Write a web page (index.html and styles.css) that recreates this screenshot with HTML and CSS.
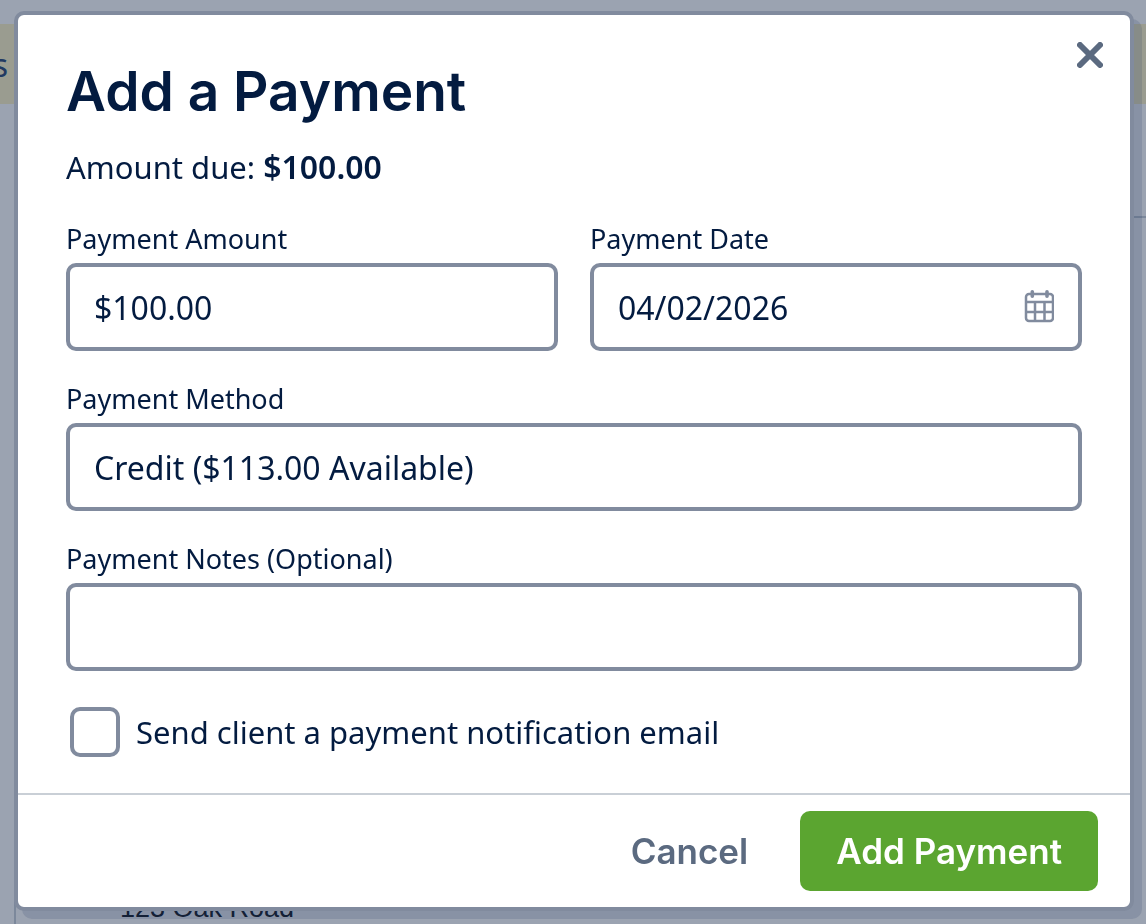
FILE: index.html
```
<!DOCTYPE html>
<html lang="en">
<head>
  <meta charset="UTF-8">
  <meta name="viewport" content="width=device-width, initial-scale=1.0">
  <title>Add a Payment</title>
  <link rel="stylesheet" href="styles.css">
</head>
<body>
  <div class="page">
    <div class="banner"><span>s</span></div>
    <div class="invoice">
      <p class="address">123 Oak Road</p>
    </div>
  </div>

  <div class="overlay">
    <form class="modal" role="dialog" aria-labelledby="modal-title">
      <button type="button" class="close" aria-label="Close">
        <svg viewBox="0 0 26 26" width="26" height="26">
          <path d="M3 3L23 23M23 3L3 23" stroke="currentColor" stroke-width="6" stroke-linecap="round"/>
        </svg>
      </button>

      <div class="modal-body">
        <h1 id="modal-title">Add a Payment</h1>
        <p class="due">Amount due: <strong>$100.00</strong></p>

        <div class="fields">
          <div class="field">
            <label for="amount">Payment Amount</label>
            <input type="text" id="amount" class="control" value="$100.00">
          </div>
          <div class="field">
            <label for="date">Payment Date</label>
            <div class="control date-control">
              <input type="text" id="date" value="04/02/2026">
              <button type="button" class="calendar" aria-label="Choose date">
                <svg viewBox="0 0 30 34" width="30" height="34" fill="none" stroke="currentColor" stroke-width="2.5">
                  <rect x="2" y="4" width="27" height="27" rx="3"/>
                  <path d="M2 12H29M2 22H29M11 12V31M20.500 12V31"/>
                  <path d="M8.300 1.800V6.200M23 1.800V6.200" stroke-width="3.600" stroke-linecap="round"/>
                </svg>
              </button>
            </div>
          </div>
          <div class="field wide">
            <label for="method">Payment Method</label>
            <select id="method" class="control">
              <option>Credit ($113.00 Available)</option>
            </select>
          </div>
          <div class="field wide">
            <label for="notes">Payment Notes (Optional)</label>
            <input type="text" id="notes" class="control">
          </div>
        </div>

        <div class="notify">
          <input type="checkbox" id="notify">
          <label for="notify">Send client a payment notification email</label>
        </div>
      </div>

      <div class="modal-footer">
        <button type="button" class="btn btn-cancel">Cancel</button>
        <button type="submit" class="btn btn-primary">Add Payment</button>
      </div>
    </form>
  </div>
</body>
</html>
```

FILE: styles.css
```
* {
  box-sizing: border-box;
}
body {
  margin: 0;
  font-family: "Noto Sans", sans-serif;
  font-size: 32px;
  color: #031b40;
}
h1, p {
  margin: 0;
}
button, input, select {
  font: inherit;
  color: inherit;
}
button {
  border: none;
  background: none;
  padding: 0;
  cursor: pointer;
}

/* page behind the dialog */
.page {
  height: 100vh;
  padding-top: 24px;
  overflow: hidden;
  background: #fff;
}
.banner {
  height: 80px;
  background: #fdf3c8;
  color: #35507c;
  line-height: 82px;
}
.banner span {
  display: flex;
  justify-content: flex-end;
  width: 8px;
}
.invoice {
  margin: 112px 0 0 14px;
  padding: 672px 0 40px 104px;
  border-top: 2px solid #cbd2da;
  border-left: 2px solid #cbd2da;
}
.address {
  font-family: "Liberation Sans", sans-serif;
  font-size: 27px;
  line-height: 36px;
  color: #24292f;
}

.overlay {
  position: fixed;
  inset: 0;
  padding: 11px 12px 12px 14px;
  background: rgba(5, 25, 60, 0.4);
}
.modal {
  position: relative;
  background: #fff;
  border: 4px solid #818b9e;
  border-radius: 10px;
  box-shadow: 8px 8px 0 rgba(3, 27, 78, 0.12);
}
.close {
  position: absolute;
  top: 27px;
  right: 27px;
  color: #5b6a80;
}
.close svg, .calendar svg {
  display: block;
}

.modal-body {
  padding: 40px 48px 36px;
}
h1 {
  font-family: Inter, sans-serif;
  font-size: 55px;
  font-weight: 600;
  line-height: 72px;
}
.due {
  margin: 16px 0 32px;
  font-size: 31px;
  line-height: 48px;
}
.due strong {
  font-size: 32px;
  font-weight: 600;
}
.fields {
  display: grid;
  grid-template-columns: 1fr 1fr;
  gap: 32px;
}
.field {
  display: flex;
  flex-direction: column;
  min-width: 0;
}
.wide {
  grid-column: 1 / -1;
}
.field label {
  font-size: 27px;
  line-height: 32px;
  padding-bottom: 8px;
}
.control {
  width: 100%;
  height: 88px;
  padding: 0 24px;
  border: 4px solid #818b9e;
  border-radius: 10px;
  background: #fff;
  appearance: none;
}
.date-control {
  display: flex;
  align-items: center;
}
.date-control input {
  flex: 1;
  min-width: 0;
  padding: 0;
  border: none;
  outline: none;
}
.calendar {
  color: #818b9e;
}

.notify {
  display: flex;
  align-items: center;
  gap: 16px;
  margin: 36px 0 0 4px;
  height: 50px;
  font-size: 31px;
}
.notify input {
  appearance: none;
  width: 50px;
  height: 50px;
  margin: 0;
  border: 4px solid #818b9e;
  border-radius: 10px;
  background: #fff;
}

.modal-footer {
  display: flex;
  justify-content: flex-end;
  gap: 16px;
  padding: 16px 32px;
  border-top: 2px solid #c9cfd6;
}
.btn {
  height: 80px;
  padding: 0 36px;
  border-radius: 10px;
  font-family: Inter, sans-serif;
  font-size: 35px;
  font-weight: 600;
}
.btn-cancel {
  color: #5b6a80;
}
.btn-primary {
  background: #5ba530;
  color: #fff;
}
```
